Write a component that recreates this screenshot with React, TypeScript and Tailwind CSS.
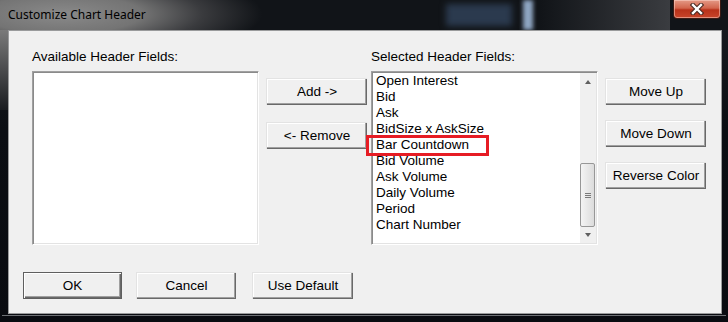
const selectedFields = [
  "Open Interest",
  "Bid",
  "Ask",
  "BidSize x AskSize",
  "Bar Countdown",
  "Bid Volume",
  "Ask Volume",
  "Daily Volume",
  "Period",
  "Chart Number",
];

function Btn({ label, isDefault = false, w = "w-[101px]" }: { label: string; isDefault?: boolean; w?: string }) {
  return (
    <div
      className={
        "flex h-[27px] items-center justify-center bg-[#f0f0f0] text-[13.5px] leading-4 text-black " +
        w +
        " " +
        (isDefault
          ? "border border-[#5f5f5f] shadow-[inset_1px_1px_0_#ffffff,inset_-1px_-1px_0_#696969,inset_-2px_-2px_0_#a0a0a0]"
          : "border-t border-l border-t-[#e3e3e3] border-l-[#e3e3e3] shadow-[inset_-1px_-1px_0_#696969,inset_-2px_-2px_0_#a0a0a0,inset_1px_1px_0_#ffffff]")
      }
    >
      {label}
    </div>
  );
}

function ListBox({ children }: { children?: React.ReactNode }) {
  return (
    <div className="relative h-[174px] w-[227px] border-t border-l border-b border-r border-t-[#a0a0a0] border-l-[#a0a0a0] border-b-[#ffffff] border-r-[#ffffff] bg-white shadow-[inset_1px_1px_0_#8a8a8a,inset_-1px_-1px_0_#e3e3e3]">
      {children}
    </div>
  );
}

function ScrollBar() {
  return (
    <div className="absolute right-[1px] top-[1px] bottom-[1px] flex w-[16px] flex-col bg-[#f0f0f0]">
      <div className="flex h-[17px] items-center justify-center">
        <div className="h-0 w-0 border-x-[3.5px] border-b-[4px] border-x-transparent border-b-[#606060]" />
      </div>
      <div className="h-[73px]" />
      <div className="flex h-[64px] w-[15px] flex-col items-center justify-center gap-[1px] rounded-[2px] border border-[#979797] bg-[linear-gradient(90deg,#f4f4f4,#dcdcdc)]">
        <div className="h-px w-[6px] bg-[#7a7a7a]" />
        <div className="h-px w-[6px] bg-[#7a7a7a]" />
        <div className="h-px w-[6px] bg-[#7a7a7a]" />
      </div>
      <div className="flex flex-1 items-center justify-center">
        <div className="h-0 w-0 border-x-[3.5px] border-t-[4px] border-x-transparent border-t-[#606060]" />
      </div>
    </div>
  );
}

export default function App() {
  return (
    <div className="relative h-[322px] w-[728px] overflow-hidden bg-[linear-gradient(180deg,#1a1d22_0%,#0b0e13_40%,#090b10_100%)] font-['Liberation_Sans',Arial,sans-serif]">
      {/* glass title bar */}
      <div className="relative flex h-[30px] items-center bg-[radial-gradient(ellipse_200px_48px_at_62px_14px,#8a8a8a_0%,#747474_40%,#3a3b3e_70%,#111418_100%)]">
        <div className="absolute left-[446px] top-[4px] h-[22px] w-[66px] bg-[#2b3a4e] blur-[3px]" />
        <div className="absolute left-[523px] top-[0px] h-[30px] w-[10px] bg-[#8fa6c2] blur-[2px]" />
        <div className="absolute left-[540px] top-[0px] h-[30px] w-[130px] bg-[linear-gradient(90deg,#111418,#3a3c40)]" />
        <span className="relative ml-[8px] font-['Noto_Sans',sans-serif] text-[12px] text-black">
          Customize Chart Header
        </span>
        <div className="absolute left-[673px] top-0 flex h-[19px] w-[48px] items-center justify-center rounded-b-[4px] border border-t-0 border-[#3a1a14] bg-[linear-gradient(180deg,#e49a86_0%,#d2654c_45%,#b8321a_55%,#c8452a_100%)] shadow-[inset_0_0_0_1px_rgba(255,220,210,0.5)]">
          <svg width="14" height="12" viewBox="0 0 14 12">
            <path d="M3 2 L11 10 M11 2 L3 10" stroke="#4a2a22" strokeWidth="4.5" strokeLinecap="square" />
            <path d="M3 2 L11 10 M11 2 L3 10" stroke="#ffffff" strokeWidth="2.4" strokeLinecap="square" />
          </svg>
        </div>
      </div>

      {/* left frame glass reflection */}
      <div className="absolute left-0 top-[30px] h-[80px] w-[8px] bg-[linear-gradient(180deg,#7a7a7a,#1a1c20)]" />

      {/* client area */}
      <div className="relative ml-[8px] h-[284px] w-[714px] border border-[#9a9b9c] bg-[#f0f0f0] pl-[14px] pt-[18px]">
        <div className="ml-[9px] flex">
          <div className="flex flex-col">
            <div className="mb-[6px] h-4 text-[13.5px] leading-4 text-black">Available Header Fields:</div>
            <ListBox />
          </div>

          <div className="ml-[7px] flex flex-col gap-[17px] pt-[29px]">
            <Btn label="Add ->" />
            <Btn label="<- Remove" />
          </div>

          <div className="ml-[4px] flex flex-col">
            <div className="mb-[6px] h-4 text-[13.5px] leading-4 text-black">Selected Header Fields:</div>
            <ListBox>
              <div className="pl-[4px] pt-[1px]">
                {selectedFields.map((f) => (
                  <div key={f} className="h-4 text-[13.5px] leading-4 text-black">
                    {f}
                  </div>
                ))}
              </div>
              <ScrollBar />
              <div className="absolute left-[-6px] top-[63px] h-[21px] w-[123px] border-[3px] border-[#e61c24]" />
            </ListBox>
          </div>

          <div className="ml-[7px] flex flex-col gap-[15px] pt-[29px]">
            <Btn label="Move Up" />
            <Btn label="Move Down" />
            <Btn label="Reverse Color" />
          </div>
        </div>

        <div className="mt-[27px] flex">
          <Btn label="OK" isDefault w="w-[99px]" />
          <div className="ml-[14px]">
            <Btn label="Cancel" w="w-[100px]" />
          </div>
          <div className="ml-[16px]">
            <Btn label="Use Default" w="w-[101px]" />
          </div>
        </div>
      </div>

      {/* bottom frame edge */}
      <div className="absolute bottom-[6px] left-[2px] right-[2px] h-px bg-[#6d7074]" />
    </div>
  );
}
